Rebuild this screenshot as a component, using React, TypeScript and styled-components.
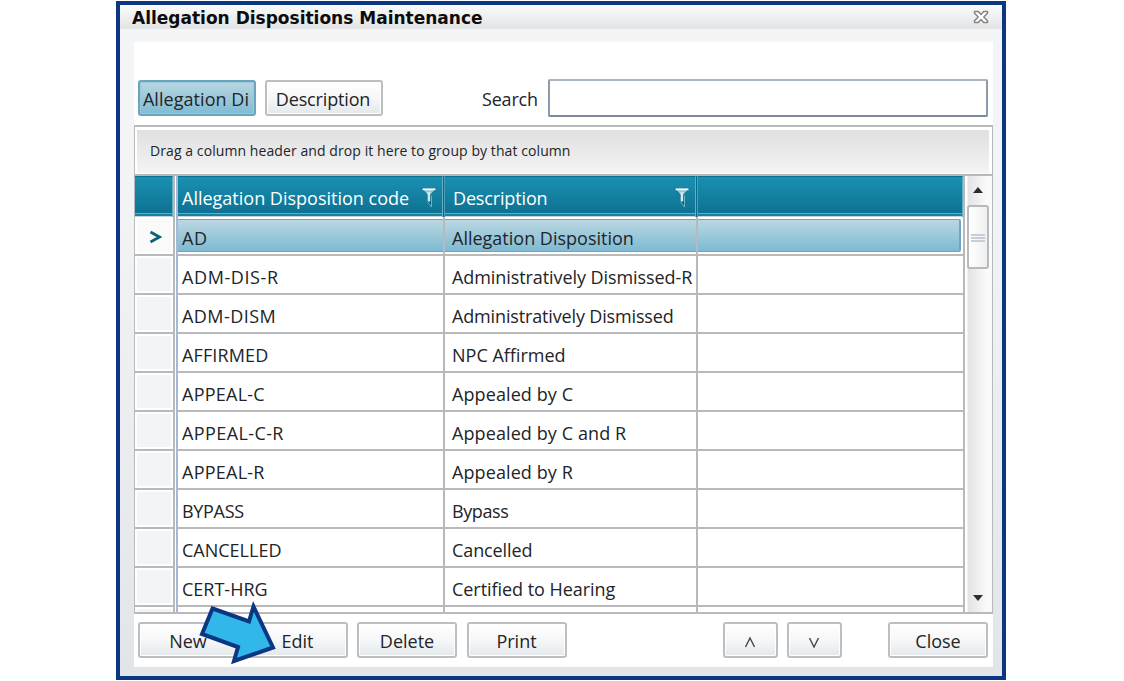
import { Fragment } from 'react';
import styled, { createGlobalStyle } from 'styled-components';

const colors = {
    navy: '#0b3782',
    line: '#b8b9ba',
    text: '#222428',
};

const GlobalStyle = createGlobalStyle`
    * {
        box-sizing: border-box;
    }

    body {
        margin: 0;
        background: #fff;
        color: ${colors.text};
        font-family: 'Open Sans', 'Noto Sans', sans-serif;
        font-size: 18px;
    }
`;

const Page = styled.div`
    width: 1124px;
    height: 681px;
    padding: 1px 0 0 116px;
    overflow: hidden;
`;

const Window = styled.div`
    position: relative;
    display: flex;
    flex-direction: column;
    width: 890px;
    height: 679px;
    border: 4px solid ${colors.navy};
    background: linear-gradient(#f4f5f6, #f2f3f5 30%, #e2e5e8);
`;

const TitleBar = styled.div`
    display: flex;
    justify-content: space-between;
    align-items: center;
    height: 24px;
    padding: 0 13px 0 12px;
    background: linear-gradient(#fafafa, #e3e4e6);
`;

const Title = styled.div`
    padding-top: 1px;
    font-family: 'DejaVu Sans', sans-serif;
    font-size: 17px;
    font-weight: 700;
    line-height: 24px;
    color: #0c0c0c;
`;

const Body = styled.div`
    display: flex;
    flex-direction: column;
    width: 859px;
    height: 625px;
    margin: 13px 0 0 14px;
    background: #fff;
`;

const SearchRow = styled.div`
    display: flex;
    align-items: center;
    height: 83px;
    padding: 29px 5px 0 4px;
`;

const Text = styled.span<{ $spacing?: number }>`
    letter-spacing: ${({ $spacing = 0 }) => $spacing}px;
    white-space: nowrap;
`;

const Button = styled.button<{ $width: number; $active?: boolean }>`
    display: flex;
    justify-content: center;
    align-items: center;
    flex: none;
    width: ${({ $width }) => $width}px;
    height: 36px;
    padding: 2px 0 0;
    overflow: hidden;
    border: 2px solid ${({ $active }) => ($active ? '#69a5bd' : '#bdbebf')};
    border-radius: 3px;
    background: ${({ $active }) =>
        $active ? 'linear-gradient(#b8d6e2, #7fbcd1)' : 'linear-gradient(#fff, #f6f7f8 50%, #e4e8eb)'};
    box-shadow: inset 0 0 0 1px ${({ $active }) => ($active ? '#9cc9da' : '#fff')};
    color: ${colors.text};
    font: inherit;
`;

const FilterButtons = styled.div`
    display: flex;
    gap: 9px;

    ${Button} {
        padding-right: 2px;
    }
`;

const SearchLabel = styled.label`
    width: 66px;
    margin-left: 99px;
    padding-top: 2px;
    letter-spacing: -0.2px;
`;

const SearchInput = styled.input`
    width: 441px;
    height: 38px;
    border: 2px solid;
    border-color: #a9b4c0 #8c9bab #7c8b9c #8c9bab;
    border-radius: 2px;
    background: #fff;
`;

const Grid = styled.div`
    display: flex;
    flex-direction: column;
    height: 489px;
    border: 2px solid ${colors.line};
    border-right-width: 1px;
    border-left-width: 1px;
`;

const GroupPanel = styled.div`
    height: 47px;
    padding-left: 13px;
    border: 3px solid #fff;
    border-width: 3px 3px 2px 2px;
    border-bottom-color: #f7f7f7;
    background: linear-gradient(#e0e0e1, #f3f3f4);
    font-size: 14px;
    line-height: 42px;
`;

const GridBody = styled.div`
    display: flex;
    flex: 1;
    min-height: 0;
    border-top: 2px solid ${colors.line};
`;

const Table = styled.div`
    display: grid;
    grid-template-columns: 38px 5px 265px 2px 251px 2px 265px;
    grid-template-rows: 41px;
    grid-auto-rows: 39px;
    flex: none;
    width: 828px;
    overflow: hidden;
`;

const HeaderCell = styled.div<{ $indent?: number }>`
    display: flex;
    justify-content: space-between;
    align-items: center;
    padding: 2px 4px 0 ${({ $indent = 0 }) => $indent}px;
    border: 1px solid #63aec5;
    border-width: 1px 1px 0 0;
    border-top-color: #0d6f8e;
    background: linear-gradient(#1a90b1, #0d7293 36px, #63aec5 36px, #63aec5 37px, #1781a3 37px, #1781a3 39px, #c5d3d9 39px);
    color: #fff;
`;

const HeaderGap = styled.div`
    border-right: 1px solid #4b9db7;
    background: #0d6b8a;
`;

const RowMarker = styled.div<{ $current?: boolean }>`
    display: flex;
    justify-content: center;
    align-items: center;
    padding: 3px 0 0 3px;
    border-bottom: 2px solid ${colors.line};
    background: ${({ $current }) => ($current ? '#fafafa' : '#f3f4f6')};
    box-shadow: inset 0 0 0 2px #fff;
`;

const FrozenLine = styled.div`
    border-left: 2px solid ${colors.line};
    border-right: 2px solid #a3b9d6;
    background: #fff;
`;

const Cell = styled.div<{ $selected?: boolean }>`
    padding: ${({ $selected }) => ($selected ? '2px 0 2px' : '0')};
    border-bottom: 2px solid ${colors.line};
    overflow: hidden;
`;

const CellFill = styled.div<{ $selected?: boolean; $indent?: number; $last?: boolean }>`
    display: flex;
    align-items: center;
    height: 100%;
    padding: 4px 0 0 ${({ $indent = 0 }) => $indent}px;
    ${({ $selected, $last }) =>
        $selected &&
        `
        margin-right: ${$last ? 2 : 0}px;
        border: solid #6fa5c4;
        border-width: 1px ${$last ? 2 : 0}px 1px 0;
        border-radius: ${$last ? '0 2px 2px 0' : 0};
        background: linear-gradient(#bad7e1, #7dbad3);
    `}
`;

const ColumnLine = styled.div`
    background: ${colors.line};
`;

const Scrollbar = styled.div`
    display: flex;
    flex-direction: column;
    align-items: center;
    flex: 1;
    padding: 11px 2px 11px 0;
    border-left: 2px solid ${colors.line};
    background: linear-gradient(90deg, #fff 2px, #e2e3e4 3px, #fafafa 80%);
`;

const Thumb = styled.div`
    display: flex;
    flex-direction: column;
    justify-content: center;
    gap: 1px;
    width: 22px;
    height: 64px;
    margin: 12px 0 auto;
    padding: 2px 2px 0;
    border: 2px solid ${colors.line};
    border-radius: 3px;
    background: linear-gradient(90deg, #fff, #eeeff0);
`;

const Grip = styled.div`
    height: 2px;
    background: #c6ccd8;
`;

const Footer = styled.div`
    display: flex;
    align-items: center;
    gap: 9.5px;
    padding: 8px 5px 0 4px;
`;

const Pager = styled.div`
    display: flex;
    gap: 9px;
    margin: 0 37px 0 auto;
`;

const Pointer = styled.svg`
    position: absolute;
    left: 78px;
    top: 593px;
`;

const CloseIcon = () => (
    <svg width="16" height="14" viewBox="0 0 16 14">
        <path
            d="M1.5 1.5h3.8L8 4.400l2.700-2.900h3.800v1.800L10.700 7l3.800 3.700v1.800h-3.800L8 9.600l-2.700 2.900H1.500v-1.800L5.300 7 1.500 3.300z"
            fill="#fff"
            stroke="#858585"
            strokeWidth="1.5"
            strokeLinejoin="round"
        />
    </svg>
);

const FilterIcon = () => (
    <svg width="18" height="23" viewBox="0 0 18 23">
        <path d="M.8 1.500h16.400L11 7.500v11.500l-4-4.500v-7z" fill="#0d5f7b" />
        <path d="M2.500 2h13L10.500 7.500h-3z" fill="#8fc9d8" />
        <path d="M2.500 2.300h13" stroke="#fff" strokeWidth="1.800" />
        <path d="M8.900 5v9.500" stroke="#cdeaf0" strokeWidth="2.600" />
        <path d="M7.500 15l4 5V8.500" fill="none" stroke="#6bb3c8" strokeWidth="1" />
    </svg>
);

const rows = [
    { code: 'AD', codeSpacing: 0.5, description: 'Allegation Disposition' },
    { code: 'ADM-DIS-R', codeSpacing: 0.6, description: 'Administratively Dismissed-R', spacing: -0.08 },
    { code: 'ADM-DISM', codeSpacing: 0.45, description: 'Administratively Dismissed', spacing: -0.15 },
    { code: 'AFFIRMED', codeSpacing: 0.12, description: 'NPC Affirmed' },
    { code: 'APPEAL-C', codeSpacing: 0.25, description: 'Appealed by C', spacing: 0.1 },
    { code: 'APPEAL-C-R', codeSpacing: 0.4, description: 'Appealed by C and R', spacing: 0.1 },
    { code: 'APPEAL-R', codeSpacing: 0.25, description: 'Appealed by R', spacing: 0.1 },
    { code: 'BYPASS', codeSpacing: -0.3, description: 'Bypass', spacing: -0.4 },
    { code: 'CANCELLED', description: 'Cancelled', spacing: -0.1 },
    { code: 'CERT-HRG', description: 'Certified to Hearing', spacing: -0.05 },
    { code: '', description: '' },
];

const App = () => (
    <Page>
        <GlobalStyle />
        <Window>
            <TitleBar>
                <Title>Allegation Dispositions Maintenance</Title>
                <CloseIcon />
            </TitleBar>
            <Body>
                <SearchRow>
                    <FilterButtons>
                        <Button $width={118} $active>
                            <Text $spacing={0.05}>Allegation Di</Text>
                        </Button>
                        <Button $width={118}>
                            <Text $spacing={-0.15}>Description</Text>
                        </Button>
                    </FilterButtons>
                    <SearchLabel>Search</SearchLabel>
                    <SearchInput />
                </SearchRow>
                <Grid>
                    <GroupPanel>
                        <Text $spacing={0.08}>Drag a column header and drop it here to group by that column</Text>
                    </GroupPanel>
                    <GridBody>
                        <Table>
                            <HeaderCell />
                            <FrozenLine />
                            <HeaderCell $indent={4}>
                                <Text>Allegation Disposition code</Text>
                                <FilterIcon />
                            </HeaderCell>
                            <HeaderGap />
                            <HeaderCell $indent={8}>
                                <Text $spacing={-0.15}>Description</Text>
                                <FilterIcon />
                            </HeaderCell>
                            <HeaderGap />
                            <HeaderCell />
                            {rows.map(({ code, codeSpacing, description, spacing }, index) => (
                                <Fragment key={index}>
                                    <RowMarker $current={index === 0}>
                                        {index === 0 && (
                                            <svg width="14" height="14" viewBox="0 0 14 14">
                                                <path
                                                    d="M1.500 2l9 5-9 5"
                                                    fill="none"
                                                    stroke="#125e7a"
                                                    strokeWidth="2.800"
                                                />
                                            </svg>
                                        )}
                                    </RowMarker>
                                    <FrozenLine />
                                    <Cell $selected={index === 0}>
                                        <CellFill $selected={index === 0} $indent={4}>
                                            <Text $spacing={codeSpacing}>{code}</Text>
                                        </CellFill>
                                    </Cell>
                                    <ColumnLine />
                                    <Cell $selected={index === 0}>
                                        <CellFill $selected={index === 0} $indent={7}>
                                            <Text $spacing={spacing}>{description}</Text>
                                        </CellFill>
                                    </Cell>
                                    <ColumnLine />
                                    <Cell $selected={index === 0}>
                                        <CellFill $selected={index === 0} $last />
                                    </Cell>
                                </Fragment>
                            ))}
                        </Table>
                        <Scrollbar>
                            <svg width="10" height="6">
                                <path d="M0 6l5-6 5 6z" fill="#2c2c2c" />
                            </svg>
                            <Thumb>
                                <Grip />
                                <Grip />
                                <Grip />
                            </Thumb>
                            <svg width="10" height="6">
                                <path d="M0 0l5 6 5-6z" fill="#2c2c2c" />
                            </svg>
                        </Scrollbar>
                    </GridBody>
                </Grid>
                <Footer>
                    <Button $width={100}>New</Button>
                    <Button $width={100}>Edit</Button>
                    <Button $width={100}>Delete</Button>
                    <Button $width={100}>Print</Button>
                    <Pager>
                        <Button $width={55}>
                            <svg width="14" height="14">
                                <path d="M2.500 13L7 4l4.500 9" fill="none" stroke="#444" strokeWidth="1.400" />
                            </svg>
                        </Button>
                        <Button $width={55}>
                            <svg width="14" height="14">
                                <path d="M2.500 4L7 13l4.500-9" fill="none" stroke="#444" strokeWidth="1.400" />
                            </svg>
                        </Button>
                    </Pager>
                    <Button $width={100}>Close</Button>
                </Footer>
            </Body>
            <Pointer width="84" height="72">
                <path
                    d="M14.500 10.500L51 23.500l4.500-15L75 49.500 36 63l4-14L4 36z"
                    fill="#31b7ea"
                    stroke={colors.navy}
                    strokeWidth="4"
                />
            </Pointer>
        </Window>
    </Page>
);

export default App;
